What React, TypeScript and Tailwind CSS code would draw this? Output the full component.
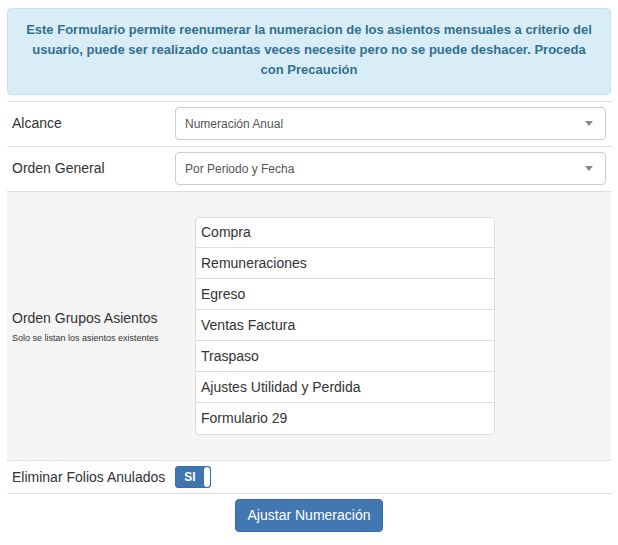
const grupos = [
  "Compra",
  "Remuneraciones",
  "Egreso",
  "Ventas Factura",
  "Traspaso",
  "Ajustes Utilidad y Perdida",
  "Formulario 29",
];

function SelectBox({ value }: { value: string }) {
  return (
    <div className="flex h-[33px] items-center justify-between rounded-[4px] border border-[#ccc] bg-white pl-[9px] pr-[10px] text-[12px] text-[#555]">
      <span>{value}</span>
      <svg width="8" height="5" viewBox="0 0 8 5" className="mr-[2px]">
        <path d="M0 0 L8 0 L4 5 Z" fill="#888" />
      </svg>
    </div>
  );
}

export default function App() {
  return (
    <div className="w-[618px] bg-white px-[7px] pt-[8px] font-['Liberation_Sans',Arial,sans-serif] text-[14px] text-[#333]">
      <div className="rounded-[4px] border border-[#bce8f1] bg-[#d9edf7] px-[15px] pt-[11px] pb-[14px] text-center text-[13px] font-bold leading-[20px] text-[#31708f]">
        Este Formulario permite reenumerar la numeracion de los asientos mensuales a criterio del
        usuario, puede ser realizado cuantas veces necesite pero no se puede deshacer. Proceda con
        Precaución
      </div>

      <div className="mt-[6px] border-b border-[#ddd]">
        <div className="flex items-center border-t border-[#ddd] pt-[5px] pb-[6px]">
          <div className="w-[168px] shrink-0 pl-[5px]">Alcance</div>
          <div className="flex-1 pr-[5px]">
            <SelectBox value="Numeración Anual" />
          </div>
        </div>

        <div className="flex items-center border-t border-[#ddd] pt-[5px] pb-[6px]">
          <div className="w-[168px] shrink-0 pl-[5px]">Orden General</div>
          <div className="flex-1 pr-[5px]">
            <SelectBox value="Por Periodo y Fecha" />
          </div>
        </div>

        <div className="flex items-center border-t border-[#ddd] bg-[#f5f5f5] pt-[25px] pb-[25px]">
          <div className="flex w-[168px] shrink-0 flex-col pl-[5px]">
            <span className="leading-[20px]">Orden Grupos Asientos</span>
            <span className="mt-[4px] text-[9px] leading-[13px]">
              Solo se listan los asientos existentes
            </span>
          </div>
          <div className="flex-1 pr-[5px]">
            <ul className="ml-[20px] w-[300px] divide-y divide-[#ddd] rounded-[4px] border border-[#ddd] bg-white">
              {grupos.map((g, i) => (
                <li
                  key={g}
                  className={`flex items-center px-[5px] ${i === 0 ? "h-[30px]" : "h-[31px]"}`}
                >
                  {g}
                </li>
              ))}
            </ul>
          </div>
        </div>

        <div className="flex items-center border-t border-[#ddd] py-[5px]">
          <div className="w-[168px] shrink-0 pl-[5px]">Eliminar Folios Anulados</div>
          <div className="flex h-[22px] w-[36px] overflow-hidden rounded-[3px] border border-[#3a6ca6] bg-[#3f75b0]">
            <span className="flex flex-1 items-center justify-center text-[12px] font-bold text-white">
              SI
            </span>
            <span className="w-[6px] rounded-[3px] bg-white" />
          </div>
        </div>
      </div>

      <div className="flex justify-center pt-[5px]">
        <button
          type="button"
          className="h-[33px] rounded-[4px] border border-[#3a6ca6] bg-[#4277b1] px-[12px] text-[14px] text-white"
        >
          Ajustar Numeración
        </button>
      </div>
    </div>
  );
}
